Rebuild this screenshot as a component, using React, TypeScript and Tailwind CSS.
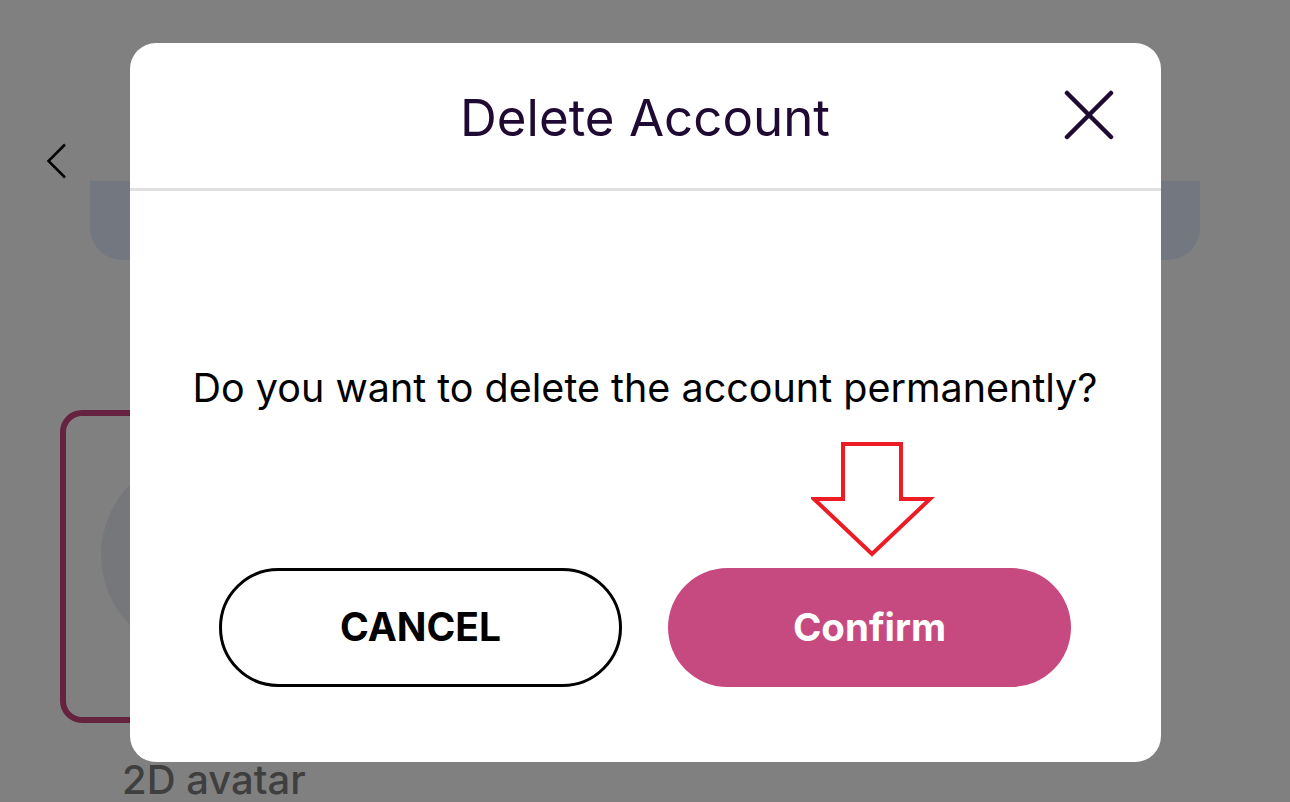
import React from "react"

function CloseIcon() {
  return (
    <svg width="50" height="50" viewBox="0 0 50 50" fill="none">
      <path d="M3 3L47 47M47 3L3 47" stroke="#1f0a33" strokeWidth="4.5" strokeLinecap="round" />
    </svg>
  )
}

function BackChevron() {
  return (
    <svg width="22" height="36" viewBox="0 0 22 36" fill="none">
      <path d="M19 1.5L2.5 18L19 34.5" stroke="#000" strokeWidth="2.5" />
    </svg>
  )
}

function DownArrow() {
  return (
    <svg width="124" height="118" viewBox="0 0 124 118" fill="none">
      <polygon
        points="32,3 90,3 90,58 119,58 61,113 3,58 32,58"
        stroke="#ed1c24"
        strokeWidth="4"
        fill="none"
      />
    </svg>
  )
}

export default function App() {
  return (
    <div
      className="relative w-[1290px] h-[802px] overflow-hidden bg-[#808080]"
      style={{ fontFamily: "Inter, 'Noto Sans', sans-serif" }}
    >
      {/* Page behind the dimmed overlay */}
      <div className="flex flex-col">
        <div className="h-[143px]" />
        <div className="pl-[46px] h-[38px]">
          <BackChevron />
        </div>
        <div className="mx-[90px] h-[79px] rounded-b-[32px] bg-[#737880]" />
        <div className="h-[150px]" />
        <div className="ml-[60px] w-[540px] h-[313px] rounded-[22px] border-[6px] border-[#662340] pl-[35px] pt-[39px]">
          <div className="w-[200px] h-[200px] rounded-full bg-[#75777b]" />
        </div>
        <div className="pl-[122px] pt-[34px] text-[40px] leading-[46px] font-medium text-[#3f3f3f]">2D avatar</div>
      </div>

      {/* Modal */}
      <div className="absolute inset-0 flex justify-center pt-[43px]">
        <div className="relative w-[1031px] h-[719px] rounded-[26px] bg-white flex flex-col">
          <div className="relative h-[145px] flex items-center justify-center">
            <h2 className="text-[51px] leading-[58px] text-[#1f0a33] mt-[4px]">Delete Account</h2>
            <button className="absolute right-[47px] top-[47px]">
              <CloseIcon />
            </button>
          </div>
          <div className="h-[3px] bg-[#e0e0e0]" />
          <div className="flex flex-col items-center pt-[175px]">
            <p className="text-[39.5px] leading-[44px] text-black">
              Do you want to delete the account permanently?
            </p>
            <div className="flex gap-[46px] mt-[158px]">
              <button className="w-[403px] h-[119px] rounded-full border-[3px] border-black bg-white text-[39px] font-bold text-black">
                CANCEL
              </button>
              <button className="w-[403px] h-[119px] rounded-full bg-[#c64a7f] text-[38.5px] font-bold text-white">
                Confirm
              </button>
            </div>
          </div>
          <div className="absolute left-[681px] top-[398px]">
            <DownArrow />
          </div>
        </div>
      </div>
    </div>
  )
}
